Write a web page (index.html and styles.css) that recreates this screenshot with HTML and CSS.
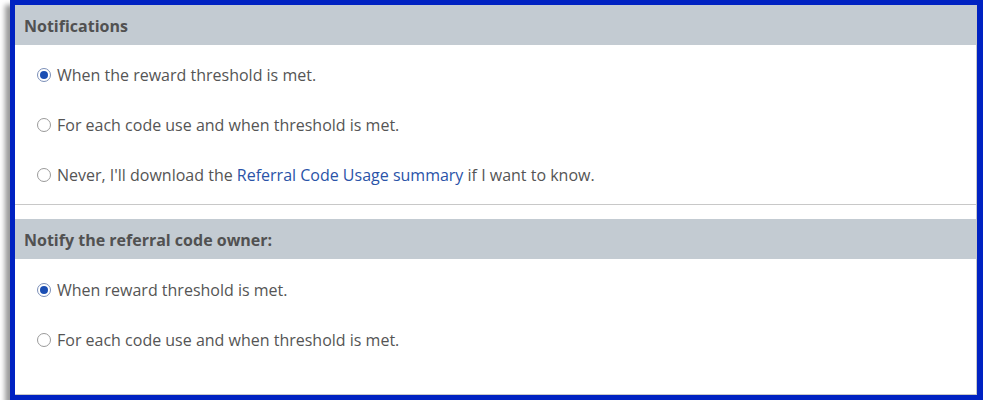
FILE: index.html
```html
<!DOCTYPE html>
<html lang="en">
<head>
<meta charset="utf-8">
<title>Notifications</title>
<link rel="stylesheet" href="styles.css">
</head>
<body>
<div class="frame">
  <div class="panel">
    <section class="group group-first">
      <h2 class="group-title">Notifications</h2>
      <ul class="options">
        <li class="option"><span class="radio checked"></span><span class="label">When the reward threshold is met.</span></li>
        <li class="option"><span class="radio"></span><span class="label">For each code use and when threshold is met.</span></li>
        <li class="option"><span class="radio"></span><span class="label">Never, I'll download the <a class="link" href="#">Referral Code Usage summary</a> if I want to know.</span></li>
      </ul>
    </section>
    <section class="group group-second">
      <h2 class="group-title">Notify the referral code owner:</h2>
      <ul class="options">
        <li class="option"><span class="radio checked"></span><span class="label">When reward threshold is met.</span></li>
        <li class="option"><span class="radio"></span><span class="label">For each code use and when threshold is met.</span></li>
      </ul>
    </section>
  </div>
</div>
</body>
</html>
```
FILE: styles.css
```css
html, body {
  margin: 0;
  padding: 0;
  background: #ffffff;
}
body {
  font-family: "Open Sans", "Noto Sans", sans-serif;
  color: #555555;
  overflow: hidden;
}
.frame {
  margin-left: 10px;
  width: 962px;
  height: 390px;
  border: 5px solid #0022c2;
  border-right-width: 6px;
  box-shadow: -5px 5px 5px rgba(0, 0, 0, 0.4);
}
.panel {
  height: 100%;
  box-sizing: border-box;
  border-right: 1px solid #c8c8c8;
  border-bottom: 1px solid #c8c8c8;
  background: #ffffff;
  display: flex;
  flex-direction: column;
}
.group-title {
  margin: 0;
  height: 40px;
  box-sizing: border-box;
  padding-top: 1px;
  display: flex;
  align-items: center;
  padding-left: 9px;
  background: #c3cbd2;
  font-size: 16px;
  font-weight: 700;
  color: #515151;
}
.options {
  list-style: none;
  margin: 0;
  padding: 5px 0 0 22px;
}
.group-first .options {
  padding-bottom: 4px;
}
.group-first {
  border-bottom: 1px solid #c8c8c8;
}
.group-second {
  margin-top: 14px;
}
.group-second .options {
  padding-top: 6px;
}
.option {
  height: 50px;
  display: flex;
  align-items: center;
  gap: 6px;
  font-size: 16px;
}
.radio {
  width: 14px;
  height: 14px;
  box-sizing: border-box;
  border: 1px solid #9a9a9a;
  border-radius: 50%;
  background: #ffffff;
  display: flex;
  align-items: center;
  justify-content: center;
  flex: none;
}
.radio.checked {
  border-color: #7b8fb8;
}
.radio.checked::after {
  content: "";
  width: 8px;
  height: 8px;
  border-radius: 50%;
  background: #1a4db3;
}
.label {
  color: #555555;
}
.link {
  color: #2a53a8;
  text-decoration: none;
}
```
